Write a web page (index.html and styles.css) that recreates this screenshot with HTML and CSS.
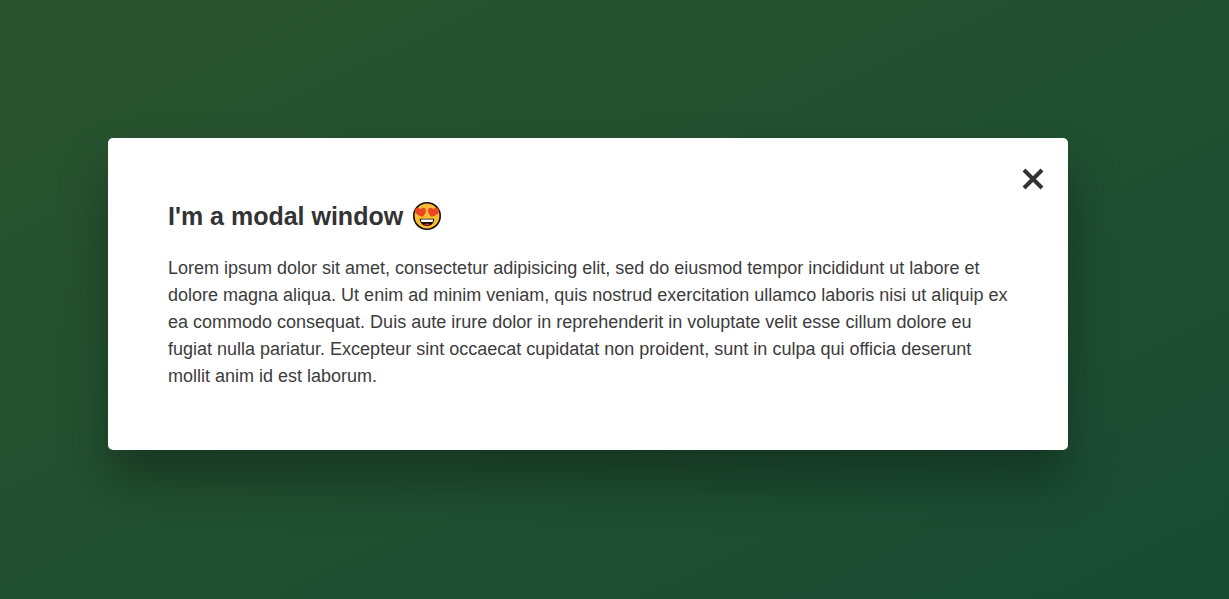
FILE: index.html
```
<!DOCTYPE html>
<html lang="en">
<head>
<meta charset="utf-8">
<title>Modal window</title>
<link rel="stylesheet" href="styles.css">
</head>
<body>
<main class="overlay">
  <section class="modal" role="dialog" aria-labelledby="modal-title">
    <button class="close-modal" aria-label="Close">
      <svg class="close-icon" viewBox="0 0 22 22" aria-hidden="true"><path d="M2 2 20 20M20 2 2 20"/></svg>
    </button>
    <h1 class="title" id="modal-title">I'm a modal window
      <svg class="emoji" viewBox="0 0 28 28" aria-hidden="true">
        <circle cx="14" cy="14" r="13.2" fill="#f8bd35" stroke="#160c04" stroke-width="1.6"/>
        <path d="M9.500 14.800C5 13.500 1.800 11.500 2 8.500C2.400 5.300 6 4.800 7.500 7.300C9.500 4.500 13 5.500 12.900 8.800C12.800 11.500 11 13.500 9.500 14.800Z" fill="#ee4423"/>
        <path d="M18.500 14.800C23 13.500 26.200 11.500 26 8.500C25.600 5.300 22 4.800 20.500 7.300C18.500 4.500 15 5.500 15.100 8.800C15.200 11.500 17 13.500 18.500 14.800Z" fill="#ee4423"/>
        <path d="M6.800 16.800H21.200C21.200 21.500 18 24 14 24S6.800 21.500 6.800 16.800Z" fill="#160c04"/>
        <path d="M8 17.600H20V19.200Q20 20 19 20H9Q8 20 8 19.200Z" fill="#fff"/>
        <path d="M11 22.600Q14 20.300 17 22.600Q14 24 11 22.600Z" fill="#d63b25"/>
      </svg>
    </h1>
    <p class="text">Lorem ipsum dolor sit amet, consectetur adipisicing elit, sed do eiusmod tempor incididunt ut labore et dolore magna aliqua. Ut enim ad minim veniam, quis nostrud exercitation ullamco laboris nisi ut aliquip ex ea commodo consequat. Duis aute irure dolor in reprehenderit in voluptate velit esse cillum dolore eu fugiat nulla pariatur. Excepteur sint occaecat cupidatat non proident, sunt in culpa qui officia deserunt mollit anim id est laborum.</p>
  </section>
</main>
</body>
</html>
```

FILE: styles.css
```
* { box-sizing: border-box; margin: 0; padding: 0; }
body { font-family: "Liberation Sans", Arial, sans-serif; color: #333; }
.overlay {
  min-height: 100vh;
  display: flex;
  align-items: center;
  padding: 0 161px 12px 108px;
  background: linear-gradient(to bottom right, #2b542e, #184b34);
}
.modal {
  position: relative;
  width: 100%;
  padding: 60px;
  background: #fff;
  border-radius: 5px;
  box-shadow: 0 30px 50px rgba(0, 0, 0, 0.3);
}
.close-modal {
  position: absolute;
  top: 30px;
  right: 24px;
  display: flex;
  border: none;
  background: none;
  cursor: pointer;
}
.close-icon { width: 22px; height: 22px; fill: none; stroke: #333; stroke-width: 4; }
.title { display: flex; align-items: center; gap: 10px; margin-bottom: 20px; font-size: 25px; line-height: 37px; }
.emoji { width: 28px; height: 28px; }
.text { color: #3c3c3c; font-size: 18px; line-height: 27px; }
```
